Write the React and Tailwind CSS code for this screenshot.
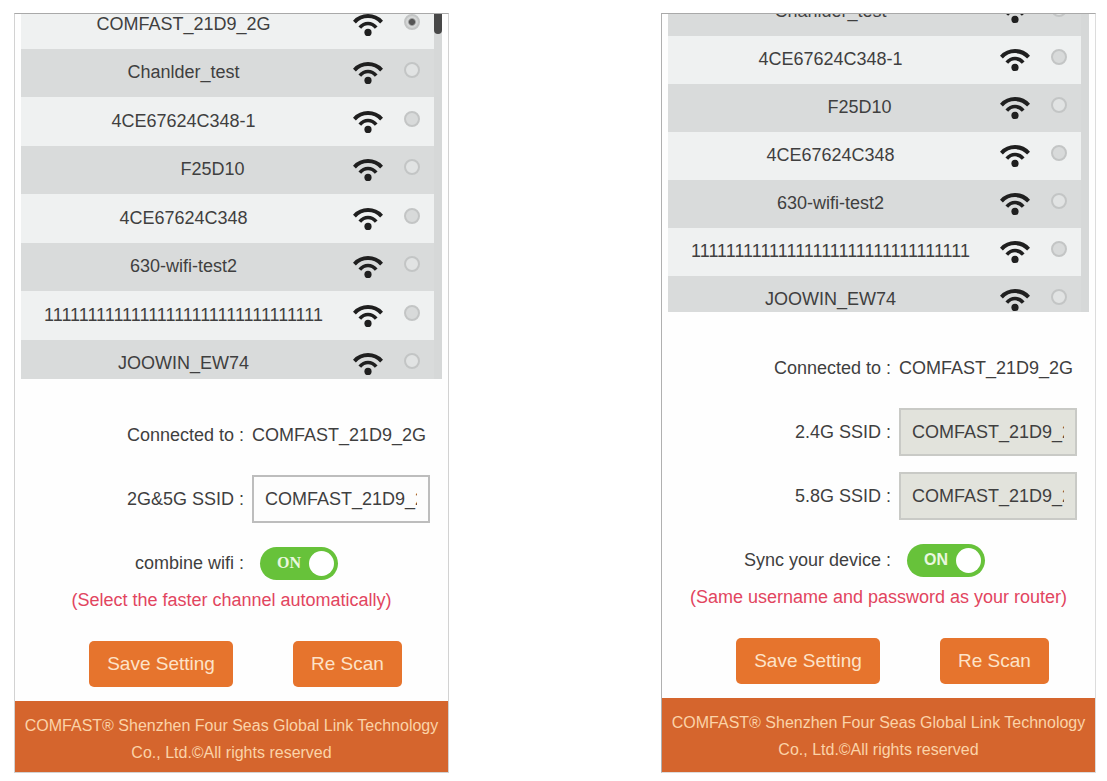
import { useState } from "react";
import clsx from "clsx";

const networks = [
    { ssid: "COMFAST_21D9_2G" },
    { ssid: "Chanlder_test" },
    { ssid: "4CE67624C348-1" },
    { ssid: "F25D10", indent: true },
    { ssid: "4CE67624C348" },
    { ssid: "630-wifi-test2" },
    { ssid: "1".repeat(32) },
    { ssid: "JOOWIN_EW74" },
];

const WifiIcon = () => (
    <svg viewBox="0 0 30 24" className="mx-auto block h-6 w-[30px]" fill="none" stroke="#1f1f1f" aria-hidden="true">
        <path d="M1.4 9.1C8.8 1.1 21.2 1.1 28.6 9.1" strokeWidth="4" />
        <path d="M6.8 14.6C11.4 9.2 18.6 9.2 23.2 14.6" strokeWidth="3.6" />
        <circle cx="15" cy="19.4" r="3.6" fill="#1f1f1f" stroke="none" />
    </svg>
);

const NetworkList = ({ id, items, selected, onSelect, listClass, tableClass, lightRow, firstDark, thumb }) => {
    return (
        <div className="px-1.5">
            <div className={clsx("flex overflow-hidden", listClass)}>
                <div className="min-w-0 flex-1">
                    <table className={clsx("w-full table-fixed border-collapse", tableClass)}>
                        <tbody>
                            {
                                items.map(({ ssid, indent }, i) => {
                                    const dark = (i % 2 === 1) !== firstDark;
                                    return (
                                        <tr key={ssid} className={dark ? "h-12 bg-[#d9dbdb]" : clsx("bg-[#eff1f1]", lightRow)}>
                                            <td className={clsx("p-0 pb-0.5 text-center leading-6", indent && "pl-[58px]")}>
                                                <label htmlFor={`${id}-${i}`}>{ssid}</label>
                                            </td>
                                            <td className="w-11 p-0">
                                                <WifiIcon />
                                            </td>
                                            <td className="w-11 p-0 pb-1.5">
                                                <input
                                                    id={`${id}-${i}`}
                                                    type="radio"
                                                    name={id}
                                                    checked={selected === ssid}
                                                    onChange={() => onSelect(ssid)}
                                                    className={clsx(
                                                        "mx-auto block h-4 w-4 appearance-none rounded-full border-2 border-[#c3c5c5] checked:bg-[radial-gradient(circle,#555_30%,#d5d7d7_50%)]",
                                                        dark ? "bg-[#e1e3e3]" : "bg-[#d8dada]"
                                                    )}
                                                />
                                            </td>
                                        </tr>
                                    );
                                })
                            }
                        </tbody>
                    </table>
                </div>
                <div className="w-2 bg-[#d6d8d8]">
                    {thumb && <div className="h-5 rounded-b-sm bg-[#484848]" />}
                </div>
            </div>
        </div>
    );
};

const Row = ({ label, htmlFor, children }) => (
    <div className="grid h-12 grid-cols-[1fr_178px] items-center gap-2 pr-[18px]">
        {
            htmlFor
                ? <label htmlFor={htmlFor} className="text-right">{label}&nbsp;:</label>
                : <span className="text-right">{label}&nbsp;:</span>
        }
        {children}
    </div>
);

const SsidInput = ({ id, disabled }) => (
    <input
        id={id}
        type="text"
        defaultValue="COMFAST_21D9_2G"
        disabled={disabled}
        className="h-12 w-full rounded-none border-2 border-[#bdbdbd] bg-[#fdfdfd] px-[11px] disabled:border-[#c9cac6] disabled:bg-[#e2e3dc]"
    />
);

const Toggle = ({ id, fontClass }) => {
    const [on, setOn] = useState(true);

    return (
        <div className="relative ml-2 h-[33px] w-[78px]">
            <input
                id={id}
                type="checkbox"
                checked={on}
                onChange={() => setOn(!on)}
                className="block h-full w-full appearance-none rounded-full bg-[#b9b9b9] checked:bg-[#67c23a]"
            />
            <span className={clsx("pointer-events-none absolute inset-0 flex items-center gap-2 px-1", on ? "justify-end" : "flex-row-reverse justify-end")}>
                <span className={clsx("text-base leading-7 font-bold text-[#e9f7df]", fontClass)}>{on ? "ON" : "OFF"}</span>
                <span className="h-[25px] w-[25px] rounded-full bg-white" />
            </span>
        </div>
    );
};

const Panel = ({ list, note, className, children }) => (
    <section className={clsx("flex min-w-0 flex-1 flex-col border bg-[#fefefe]", className)}>
        {list}

        <div className="flex flex-col gap-4 pt-8">
            {children}
        </div>
        <p className="text-center leading-[26px] text-[#e2455f]">{note}</p>

        <div className="mt-7 flex justify-center gap-[60px] pl-7 text-[19px] text-[#fde3c8]">
            <button type="button" className="h-[46px] rounded-[5px] bg-[#e6742d] px-[18px]">Save Setting</button>
            <button type="button" className="h-[46px] rounded-[5px] bg-[#e6742d] px-[18px]">Re Scan</button>
        </div>

        <footer className="mt-3.5 flex-1 bg-[#d5652d] px-1 pt-[11px] pb-1.5 text-center text-base leading-[27px] text-[#fbd3a8]">
            COMFAST® Shenzhen Four Seas Global Link Technology Co., Ltd.©All rights reserved
        </footer>
    </section>
);

const App = () => {
    const [network, setNetwork] = useState("COMFAST_21D9_2G");
    const [syncNetwork, setSyncNetwork] = useState("");

    return (
        <main className="flex gap-[212px] pt-[13px] pr-[11px] pl-3.5 font-['Liberation_Sans',Arial,sans-serif] text-lg leading-6 text-[#3f3f3f]">
            <Panel
                className="border-[#d2d2d2] border-t-[#a9a9a9]"
                note="(Select the faster channel automatically)"
                list={
                    <NetworkList
                        id="combine-network"
                        items={networks}
                        selected={network}
                        onSelect={setNetwork}
                        listClass="h-[365px]"
                        tableClass="-mt-3.5"
                        lightRow="h-[49px]"
                        firstDark={false}
                        thumb
                    />
                }
            >
                <Row label="Connected to"><span>COMFAST_21D9_2G</span></Row>
                <Row label="2G&5G SSID" htmlFor="ssid"><SsidInput id="ssid" /></Row>
                <Row label="combine wifi" htmlFor="combine"><Toggle id="combine" fontClass="font-['Liberation_Serif',serif]" /></Row>
            </Panel>

            <Panel
                className="border-[#dcdcdc] border-t-[#a9a9a9] border-l-[#b0b0b0]"
                note="(Same username and password as your router)"
                list={
                    <NetworkList
                        id="sync-network"
                        items={networks.slice(1)}
                        selected={syncNetwork}
                        onSelect={setSyncNetwork}
                        listClass="h-[298px]"
                        tableClass="-mt-[26px]"
                        lightRow="h-12"
                        firstDark
                    />
                }
            >
                <Row label="Connected to"><span>COMFAST_21D9_2G</span></Row>
                <Row label="2.4G SSID" htmlFor="ssid-24"><SsidInput id="ssid-24" disabled /></Row>
                <Row label="5.8G SSID" htmlFor="ssid-58"><SsidInput id="ssid-58" disabled /></Row>
                <Row label="Sync your device" htmlFor="sync"><Toggle id="sync" /></Row>
            </Panel>
        </main>
    );
};

export default App;
